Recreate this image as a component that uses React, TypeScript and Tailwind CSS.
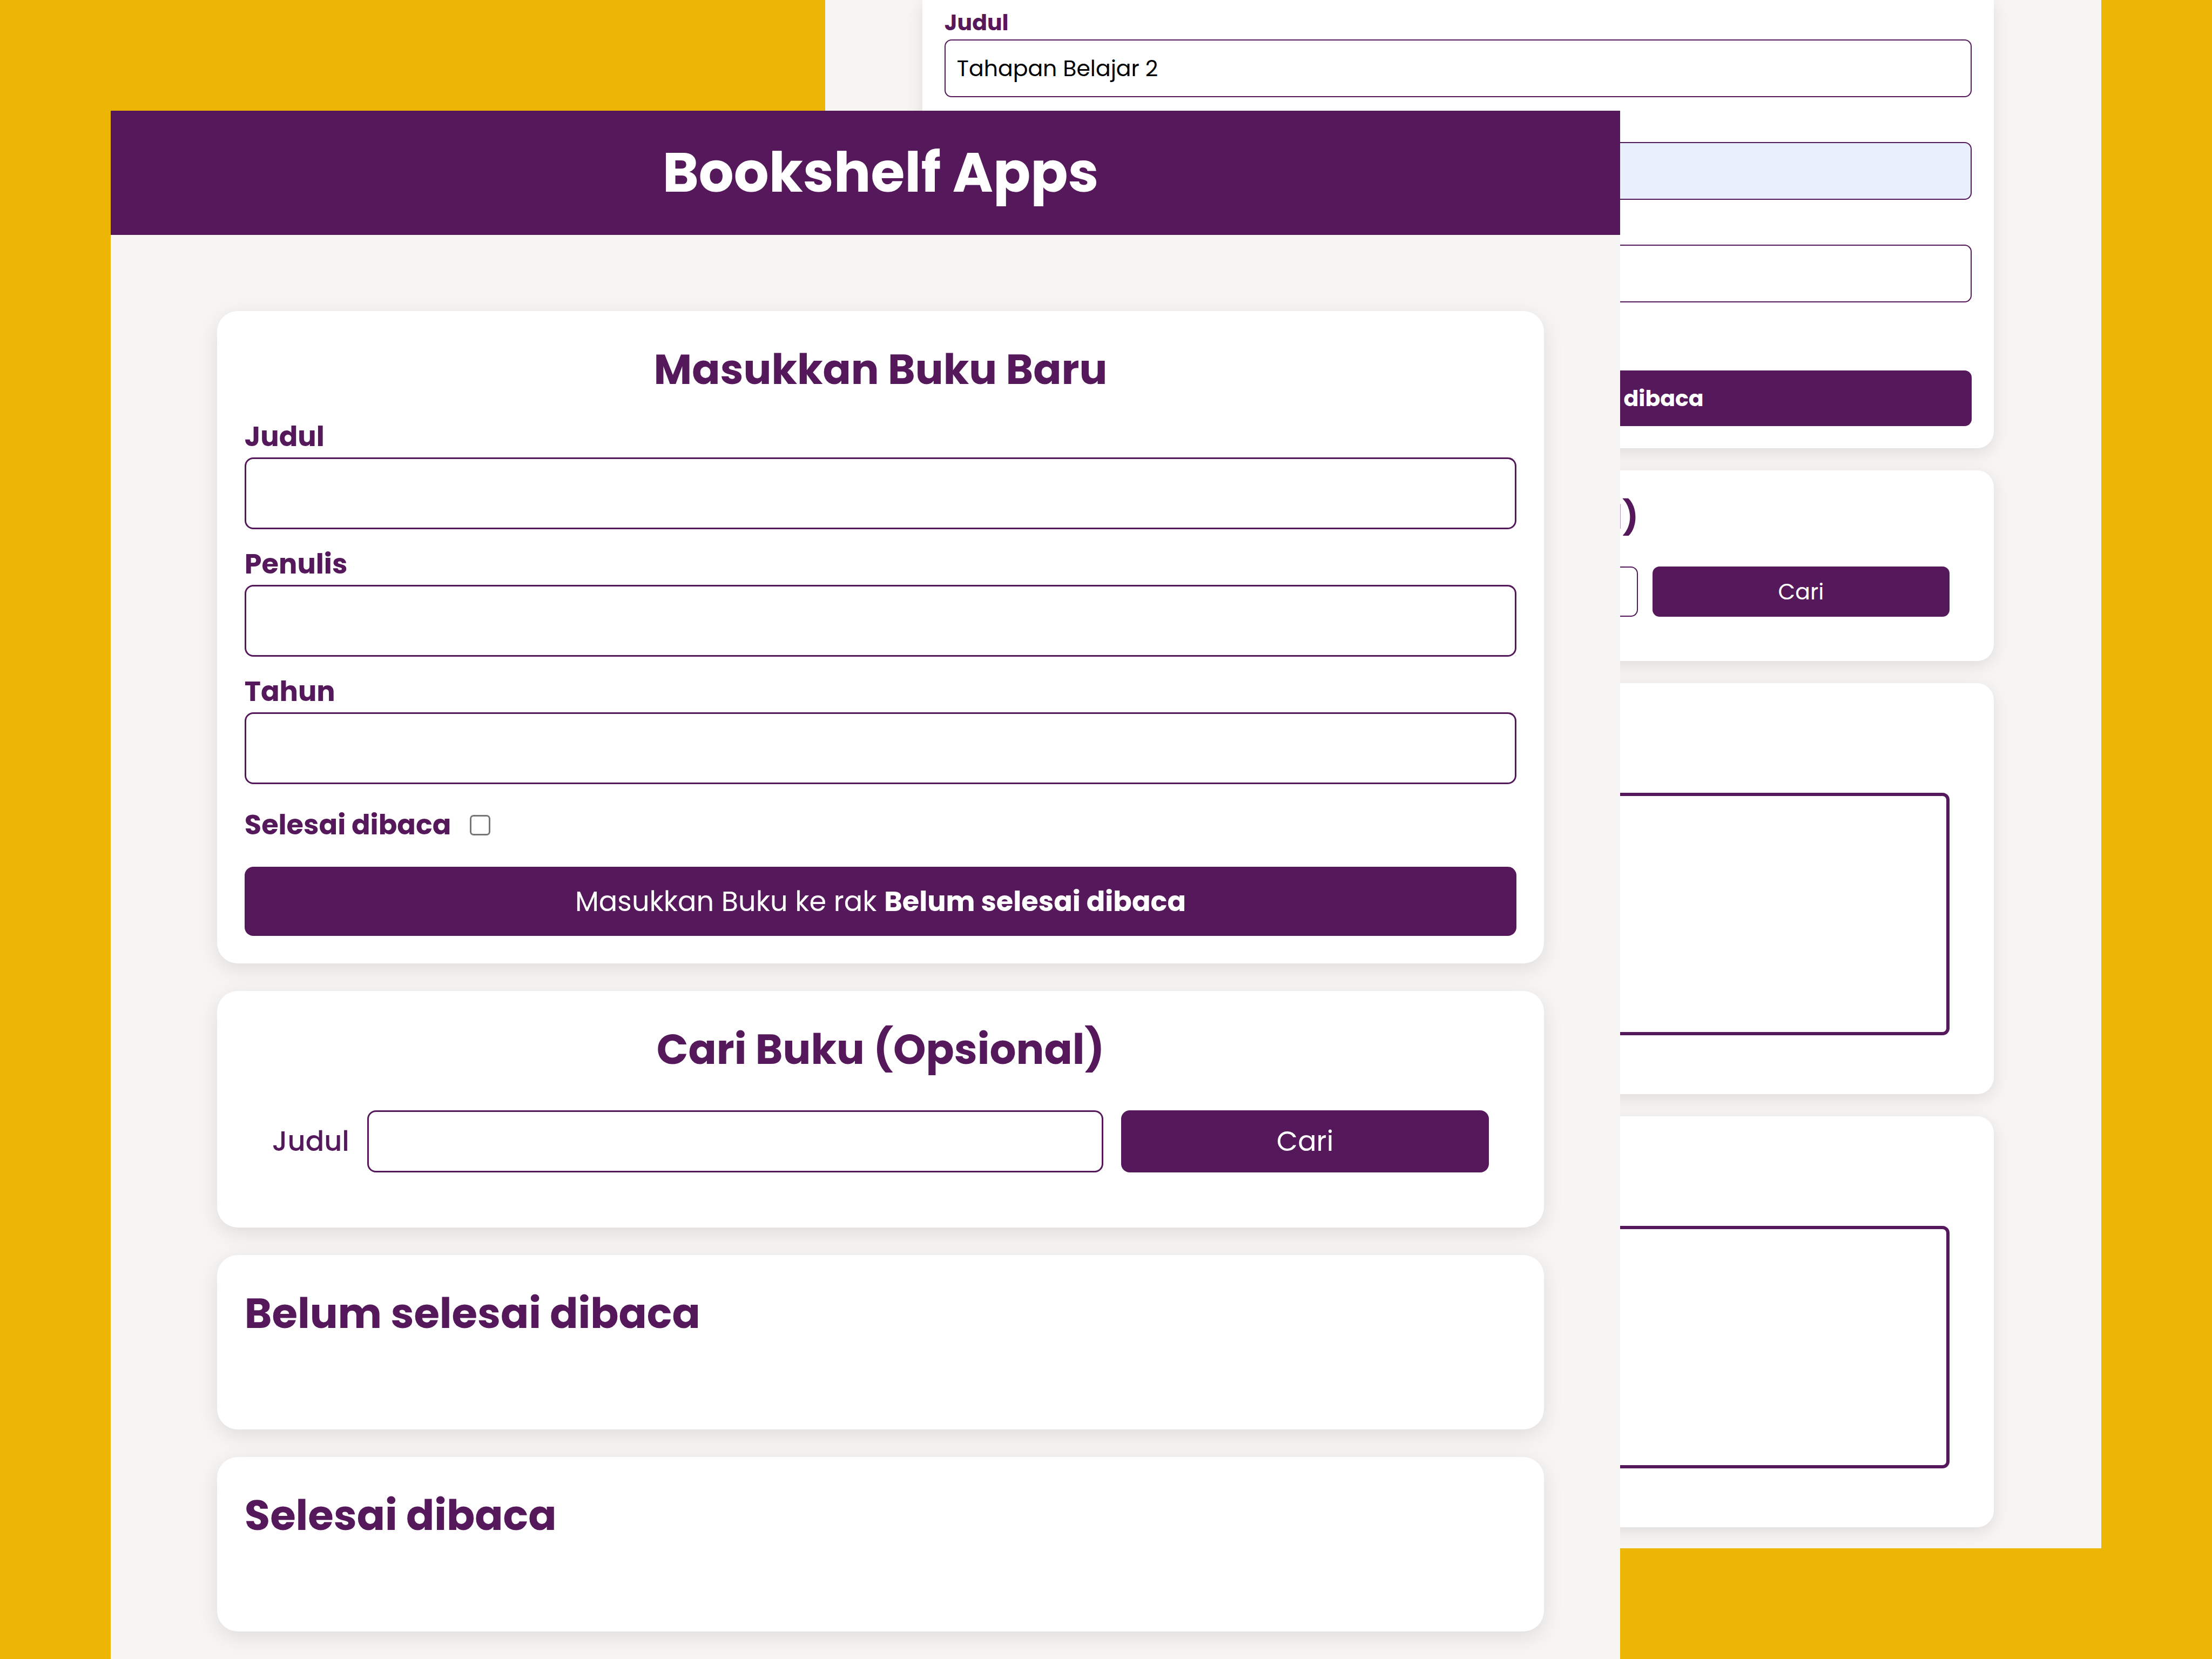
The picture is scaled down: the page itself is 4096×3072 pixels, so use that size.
import React from "react";

type Theme = {
  id: string;
  card: string;
  title: string;
  form: string;
  label: string;
  input: string;
  checkRow: string;
  checkbox: string;
  submit: string;
  searchCard: string;
  searchRow: string;
  searchLabel: string;
  searchInput: string;
  searchButton: string;
};

const large: Theme = {
  id: "front",
  card: "rounded-[38px] bg-white p-[51px] shadow-[0_10px_38px_rgba(0,0,0,0.1)]",
  title: "text-[77px] leading-[115px] font-bold",
  form: "mt-[28px] flex flex-col gap-[26px]",
  label: "text-[51px] leading-[77px] font-bold",
  input: "h-[133px] w-full rounded-[16px] border-3 border-[#54185b] px-[26px] text-[51px] text-black",
  checkRow: "mt-[11px] flex items-center gap-[35px]",
  checkbox: "size-[38px] shrink-0 appearance-none rounded-[7px] border-3 border-[#767676] bg-white",
  submit: "mt-[13px] h-[128px] w-full rounded-[16px] bg-[#54185b] text-[51px] text-white",
  searchCard: "pb-[102px]",
  searchRow: "mt-[55px] grid grid-cols-[auto_2fr_1fr] items-center gap-[33px] px-[51px]",
  searchLabel: "text-[51px] leading-[77px] font-medium",
  searchInput: "h-[115px] w-full min-w-0 rounded-[16px] border-3 border-[#54185b] bg-white px-[26px] text-[51px] text-black",
  searchButton: "h-[115px] w-full rounded-[16px] bg-[#54185b] text-[51px] text-white",
};

const small: Theme = {
  id: "back",
  card: "rounded-[31px] bg-white p-[41px] shadow-[0_8px_31px_rgba(0,0,0,0.1)]",
  title: "text-[62px] leading-[92px] font-bold",
  form: "flex flex-col gap-[21px]",
  label: "text-[41px] leading-[62px] font-bold",
  input: "h-[107px] w-full rounded-[13px] border-2 border-[#54185b] px-[21px] text-[41px] text-black",
  checkRow: "mt-[10px] flex items-center gap-[28px]",
  checkbox: "size-[31px] shrink-0 appearance-none rounded-[6px] border-2 border-[#767676] bg-white",
  submit: "mt-[12px] h-[103px] w-full rounded-[13px] bg-[#54185b] text-[41px] text-white",
  searchCard: "pb-[82px]",
  searchRow: "mt-[45px] grid grid-cols-[auto_2fr_1fr] items-center gap-[27px] px-[41px]",
  searchLabel: "text-[41px] leading-[62px] font-medium",
  searchInput: "h-[93px] w-full min-w-0 rounded-[13px] border-2 border-[#54185b] bg-white px-[21px] text-[41px] text-black",
  searchButton: "h-[93px] w-full rounded-[13px] bg-[#54185b] text-[41px] text-white",
};

type FieldProps = { t: Theme; name: string; value?: string; tint?: string; covered?: boolean };

function Field({ t, name, value = "", tint = "bg-white", covered = false }: FieldProps) {
  const id = `${t.id}-${name.toLowerCase()}`;
  return (
    <div className="flex flex-col">
      <label htmlFor={id} className={`${t.label} ${covered ? "invisible" : ""}`}>
        {name}
      </label>
      <input id={id} type="text" defaultValue={value} className={`${t.input} ${tint}`} />
    </div>
  );
}

// `behind` marks the form whose lower labels sit under the front window.
function BookForm({ t, title = "", behind = false }: { t: Theme; title?: string; behind?: boolean }) {
  const id = `${t.id}-selesai`;
  return (
    <form className={t.form} onSubmit={(e) => e.preventDefault()}>
      <Field t={t} name="Judul" value={title} />
      <Field t={t} name="Penulis" tint={behind ? "bg-[#e8f0fe]" : "bg-white"} covered={behind} />
      <Field t={t} name="Tahun" covered={behind} />
      <div className={`${t.checkRow} ${behind ? "invisible" : ""}`}>
        <label htmlFor={id} className={t.label}>
          Selesai dibaca
        </label>
        <input id={id} type="checkbox" className={t.checkbox} />
      </div>
      <button type="submit" className={t.submit}>
        Masukkan Buku ke rak <span className="font-bold">Belum selesai dibaca</span>
      </button>
    </form>
  );
}

function SearchCard({ t }: { t: Theme }) {
  const id = `${t.id}-cari`;
  return (
    <section className={`${t.card} ${t.searchCard}`}>
      <h2 className={`${t.title} text-center`}>Cari Buku (Opsional)</h2>
      <form className={t.searchRow} onSubmit={(e) => e.preventDefault()}>
        <label htmlFor={id} className={t.searchLabel}>
          Judul
        </label>
        <input id={id} type="text" className={t.searchInput} />
        <button type="submit" className={t.searchButton}>
          Cari
        </button>
      </form>
    </section>
  );
}

function EmptyShelf({ t, name }: { t: Theme; name: string }) {
  return (
    <section className={`${t.card} pb-[157px]`}>
      <h2 className={t.title}>{name}</h2>
    </section>
  );
}

function FilledShelf({ t, name }: { t: Theme; name: string }) {
  return (
    <section className={`${t.card} pb-[109px]`}>
      <h2 className={`${t.title} invisible`}>{name}</h2>
      <article className="mx-[41px] mt-[70px] h-[449px] rounded-[13px] border-6 border-[#54185b]" />
    </section>
  );
}

export default function App() {
  return (
    <main className="relative h-screen w-full overflow-hidden bg-[#edb504] font-[Poppins,Inter,sans-serif] text-[#54185b]">
      <div className="absolute top-0 right-[5%] w-[57.7%] overflow-hidden bg-[#f6f5f3]">
        <div className="flex flex-col gap-[41px] pr-[199px] pb-[39px] pl-[180px]">
          <section className={`${small.card} rounded-t-none pt-[11px]`}>
            <BookForm t={small} title="Tahapan Belajar 2" behind />
          </section>
          <SearchCard t={small} />
          <FilledShelf t={small} name="Belum selesai dibaca" />
          <FilledShelf t={small} name="Selesai dibaca" />
        </div>
      </div>

      <div className="absolute top-[205px] bottom-0 left-[5%] w-[68.25%] overflow-hidden bg-[#f6f5f3]">
        <div className="w-[102%]">
          <header className="bg-[#54185b] py-[38px] text-center text-white">
            <h1 className="text-[102px] leading-[154px] font-bold">Bookshelf Apps</h1>
          </header>
          <div className="flex flex-col gap-[51px] px-[197px] pt-[141px] pb-[51px]">
            <section className={large.card}>
              <h2 className={`${large.title} text-center`}>Masukkan Buku Baru</h2>
              <BookForm t={large} />
            </section>
            <SearchCard t={large} />
            <EmptyShelf t={large} name="Belum selesai dibaca" />
            <EmptyShelf t={large} name="Selesai dibaca" />
          </div>
        </div>
      </div>
    </main>
  );
}
